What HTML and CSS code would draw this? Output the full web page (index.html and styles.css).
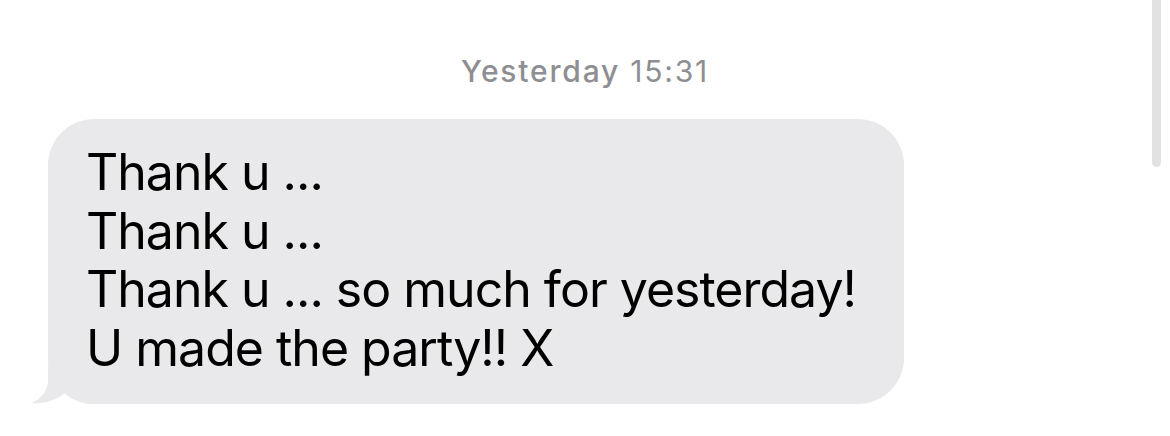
FILE: index.html
```html
<!DOCTYPE html>
<html>
<head>
<meta charset="utf-8">
<link rel="stylesheet" href="styles.css">
</head>
<body>
<div class="thread">
  <div class="stamp"><span class="day">Yesterday</span> 15:31</div>
  <div class="row">
    <div class="bubble">
      <svg class="tail" width="70" height="40" viewBox="0 0 70 40"><path d="M16 0 L16 16 C16 28 8 35 0 39 C12 40.5 24 36 33 29 C40 36 50 40 62 40 L70 40 L70 0 Z" fill="#e9e9eb"/></svg>
      <div class="text">Thank u ...<br>Thank u ...<br>Thank u ... so much for yesterday!<br>U made the party!! X</div>
    </div>
  </div>
  <div class="scrollbar"></div>
</div>
</body>
</html>
```
FILE: styles.css
```css
html, body {
  margin: 0;
  padding: 0;
  background: #ffffff;
}
.thread {
  position: relative;
  width: 1170px;
  height: 436px;
  overflow: hidden;
  font-family: Inter, "Liberation Sans", sans-serif;
}
.stamp {
  padding-top: 55px;
  height: 32px;
  line-height: 32px;
  font-size: 30px;
  letter-spacing: 1.8px;
  color: #8e8e93;
  text-align: center;
}
.stamp .day {
  font-weight: 500;
}
.row {
  display: flex;
  padding-top: 32px;
  padding-left: 48px;
}
.bubble {
  position: relative;
  background: #e9e9eb;
  border-radius: 46px;
  padding: 24px 48px 26px 38px;
}
.tail {
  position: absolute;
  left: -16px;
  bottom: 0;
  display: block;
}
.text {
  position: relative;
  font-size: 50px;
  line-height: 58.7px;
  letter-spacing: -1px;
  color: #000;
  white-space: nowrap;
}
.scrollbar {
  position: absolute;
  top: -10px;
  left: 1152px;
  width: 9px;
  height: 177px;
  border-radius: 5px;
  background: #e2e2e2;
}
```
